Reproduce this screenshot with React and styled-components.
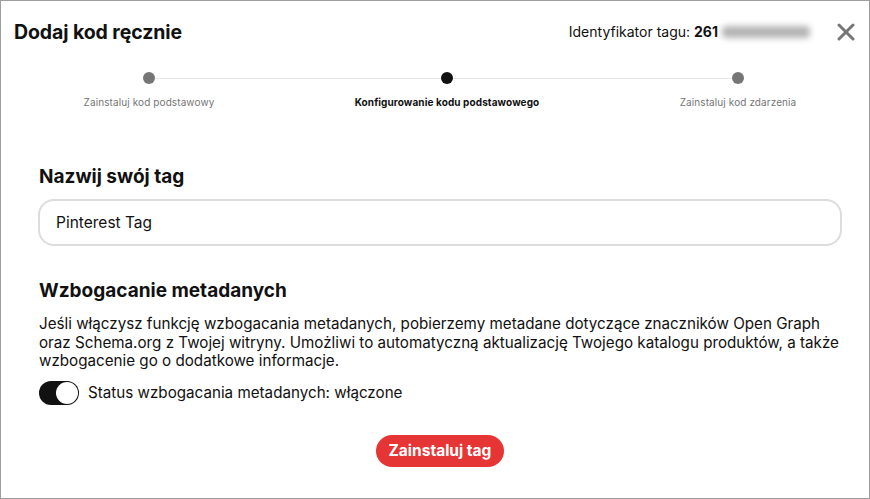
import React from "react";
import styled, { createGlobalStyle } from "styled-components";

const Global = createGlobalStyle`
  html, body { margin: 0; padding: 0; background: #fff; }
  body { font-family: Inter, "Noto Sans", "Liberation Sans", sans-serif; color: #111; }
  * { box-sizing: border-box; }
`;

const Frame = styled.div`
  width: 870px;
  height: 499px;
  border: 1px solid #9e9e9e;
  display: flex;
  flex-direction: column;
  overflow: hidden;
`;

const Header = styled.div`
  display: flex;
  align-items: center;
  justify-content: space-between;
  padding: 17px 13px 0 13px;
  height: 44px;
`;

const Title = styled.h1`
  margin: 0;
  font-size: 19.5px;
  font-weight: 700;
  letter-spacing: -0.1px;
  color: #111;
`;

const HeaderRight = styled.div`
  display: flex;
  align-items: center;
`;

const TagId = styled.div`
  font-size: 14px;
  color: #111;
  display: flex;
  align-items: center;
  b { font-weight: 700; margin-left: 4px; }
`;

const Blurred = styled.span`
  display: inline-block;
  width: 88px;
  height: 12px;
  margin-left: 4px;
  background: #b4b4b4;
  border-radius: 4px;
  filter: blur(3px);
`;

const CloseBtn = styled.button`
  border: none;
  background: none;
  padding: 0;
  margin-left: 26px;
  width: 20px;
  height: 20px;
  display: flex;
  align-items: center;
  justify-content: center;
  cursor: pointer;
`;

const Stepper = styled.div`
  position: relative;
  display: grid;
  grid-template-columns: 196px 400px 182px;
  margin: 27px 0 0 50px;
`;

const Track = styled.div`
  position: absolute;
  top: 6px;
  left: 98px;
  width: 589px;
  height: 1px;
  background: #e6e6e6;
`;

const Step = styled.div`
  position: relative;
  display: flex;
  flex-direction: column;
  align-items: center;
`;

const Dot = styled.div`
  width: 12px;
  height: 12px;
  border-radius: 50%;
  background: ${(p) => (p.$active ? "#111" : "#767676")};
`;

const StepLabel = styled.div`
  margin-top: 12px;
  font-size: 10px;
  white-space: nowrap;
  color: ${(p) => (p.$active ? "#111" : "#767676")};
  font-weight: ${(p) => (p.$active ? 700 : 400)};
  letter-spacing: 0.1px;
`;

const Body = styled.div`
  padding: 0 27px 0 37px;
  display: flex;
  flex-direction: column;
`;

const SectionTitle = styled.h2`
  margin: ${(p) => p.$mt || "0"} 0 0 1px;
  font-size: 19px;
  font-weight: 700;
  color: #111;
  line-height: 22px;
`;

const Input = styled.input`
  margin-top: 11px;
  width: 804px;
  height: 47px;
  border: 2px solid #dcdcdc;
  border-radius: 16px;
  padding: 0 16px;
  font-family: inherit;
  font-size: 15.5px;
  color: #111;
  outline: none;
`;

const Paragraph = styled.p`
  margin: 13px 0 0 1px;
  font-size: 15.2px;
  line-height: 18.5px;
  color: #111;
  white-space: nowrap;
`;

const ToggleRow = styled.div`
  display: flex;
  align-items: center;
  margin-top: 10px;
  gap: 9px;
  font-size: 15.2px;
  color: #111;
`;

const Toggle = styled.div`
  width: 40px;
  height: 24px;
  border-radius: 12px;
  background: #111;
  position: relative;
  margin-left: 1px;
  &::after {
    content: "";
    position: absolute;
    right: 1px;
    top: 1px;
    width: 22px;
    height: 22px;
    border-radius: 50%;
    background: #fff;
  }
`;

const Footer = styled.div`
  display: flex;
  justify-content: center;
  margin-top: 30px;
  padding-left: 10px;
`;

const PrimaryButton = styled.button`
  height: 32px;
  padding: 0 13px;
  border: none;
  border-radius: 16px;
  background: #e53535;
  color: #fff;
  font-family: inherit;
  font-size: 15.5px;
  font-weight: 700;
  cursor: pointer;
`;

export default function App() {
  return (
    <>
      <Global />
      <Frame>
        <Header>
          <Title>Dodaj kod ręcznie</Title>
          <HeaderRight>
            <TagId>
              Identyfikator tagu: <b>261</b>
              <Blurred />
            </TagId>
            <CloseBtn aria-label="Zamknij">
              <svg width="18" height="18" viewBox="0 0 18 18">
                <path d="M2 2 L16 16 M16 2 L2 16" stroke="#767676" strokeWidth="3" strokeLinecap="round" />
              </svg>
            </CloseBtn>
          </HeaderRight>
        </Header>
        <Stepper>
          <Track />
          <Step>
            <Dot />
            <StepLabel>Zainstaluj kod podstawowy</StepLabel>
          </Step>
          <Step>
            <Dot $active />
            <StepLabel $active>Konfigurowanie kodu podstawowego</StepLabel>
          </Step>
          <Step>
            <Dot />
            <StepLabel>Zainstaluj kod zdarzenia</StepLabel>
          </Step>
        </Stepper>
        <Body>
          <SectionTitle $mt="58px">Nazwij swój tag</SectionTitle>
          <Input defaultValue="Pinterest Tag" />
          <SectionTitle $mt="34px">Wzbogacanie metadanych</SectionTitle>
          <Paragraph>
            Jeśli włączysz funkcję wzbogacania metadanych, pobierzemy metadane dotyczące znaczników Open Graph
            <br />
            oraz Schema.org z Twojej witryny. Umożliwi to automatyczną aktualizację Twojego katalogu produktów, a także
            <br />
            wzbogacenie go o dodatkowe informacje.
          </Paragraph>
          <ToggleRow>
            <Toggle />
            <span>Status wzbogacania metadanych: włączone</span>
          </ToggleRow>
        </Body>
        <Footer>
          <PrimaryButton>Zainstaluj tag</PrimaryButton>
        </Footer>
      </Frame>
    </>
  );
}
